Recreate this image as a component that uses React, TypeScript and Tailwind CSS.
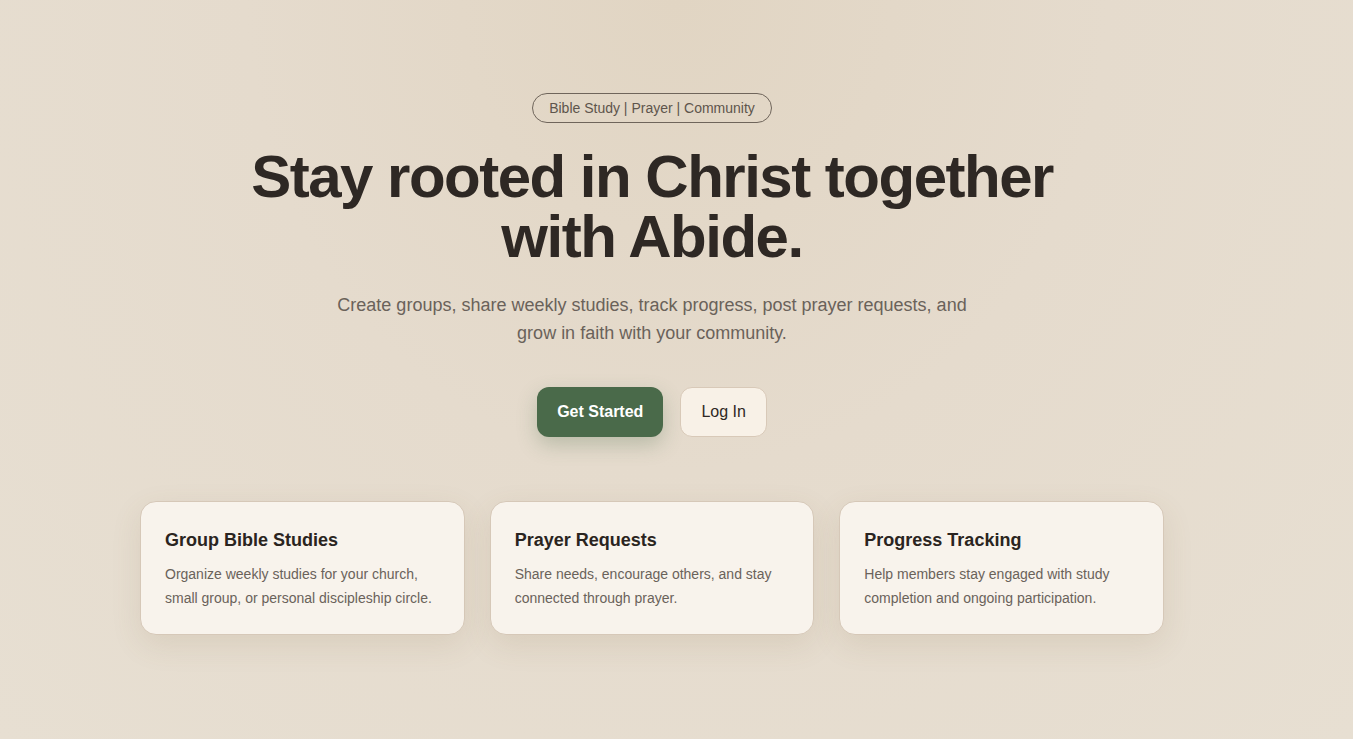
const FEATURES = [
  {
    title: "Group Bible Studies",
    body: "Organize weekly studies for your church, small group, or personal discipleship circle.",
  },
  {
    title: "Prayer Requests",
    body: "Share needs, encourage others, and stay connected through prayer.",
  },
  {
    title: "Progress Tracking",
    body: "Help members stay engaged with study completion and ongoing participation.",
  },
];

export default function App() {
  return (
    <div className="min-h-screen w-full bg-[#e6ddcf] bg-[radial-gradient(ellipse_at_top,#e1d5c3_0%,#e5dbcd_45%,#e7dfd2_100%)] font-['Liberation_Sans',Arial,sans-serif] text-[#2e2824]">
      <main className="flex flex-col items-center pl-0 pr-[49px] pt-[93px] pb-24">
        <span className="rounded-full border border-[#6f655b] px-4 py-[5px] text-sm leading-[18px] text-[#5e554c]">
          Bible Study | Prayer | Community
        </span>

        <h1 className="mt-[24px] max-w-[840px] text-center text-[60px] font-bold leading-[60px] tracking-[-0.025em] text-[#2e2824]">
          Stay rooted in Christ together with Abide.
        </h1>

        <p className="mt-[24px] max-w-[660px] text-center text-lg leading-7 text-[#6a625a]">
          Create groups, share weekly studies, track progress, post prayer
          requests, and grow in faith with your community.
        </p>

        <div className="mt-10 flex items-center gap-[17px]">
          <button className="rounded-xl bg-[#4a6a4a] px-5 py-[13px] text-base font-bold leading-6 text-white shadow-[0_8px_20px_rgba(74,106,74,0.28)]">
            Get Started
          </button>
          <button className="rounded-xl border border-[#d8c9b8] bg-[#f8f1e7] px-5 py-3 text-base leading-6 text-[#2e2824]">
            Log In
          </button>
        </div>

        <div className="mt-[64px] grid w-full max-w-[1024px] grid-cols-3 gap-[25px]">
          {FEATURES.map((f) => (
            <div
              key={f.title}
              className="rounded-2xl border border-[#d6c8b8] bg-[#f8f3ec] p-6 shadow-[0_10px_30px_rgba(120,95,60,0.12)]"
            >
              <h3 className="text-lg font-bold leading-7 text-[#2a2420]">
                {f.title}
              </h3>
              <p className="mt-2 text-sm leading-6 text-[#6a625a]">{f.body}</p>
            </div>
          ))}
        </div>
      </main>
    </div>
  );
}
